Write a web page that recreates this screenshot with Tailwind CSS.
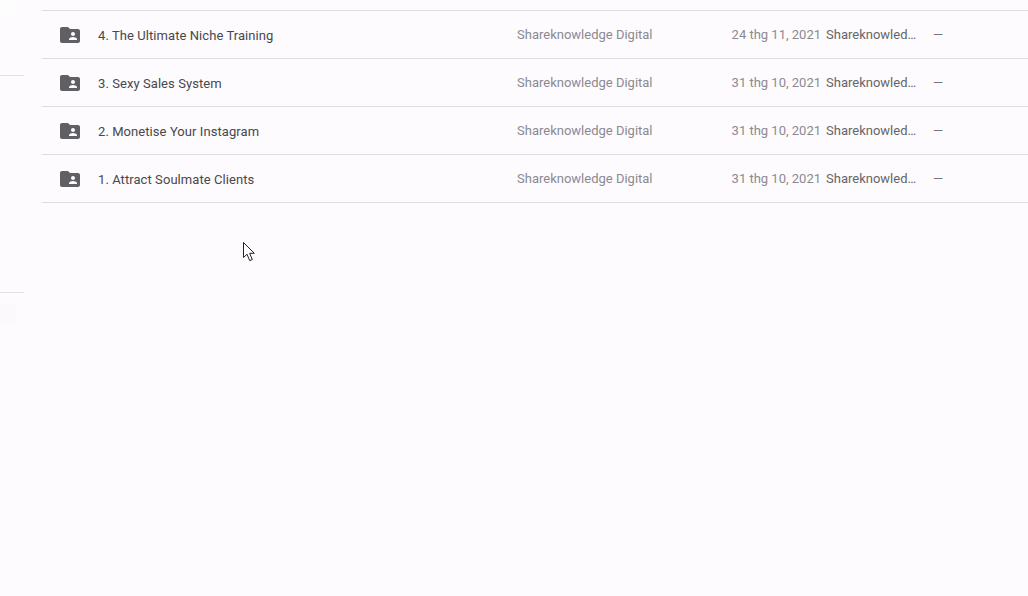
<!DOCTYPE html>
<html><head><meta charset="utf-8"><script src="https://cdn.jsdelivr.net/npm/@tailwindcss/browser@4"></script></head>
<body class="bg-[#fdfbfe]">
<div class="relative flex h-[596px] w-[1028px] overflow-hidden bg-[#fdfbfe] font-['Roboto',sans-serif] text-[13px]">
  <aside class="flex h-full w-[24px] shrink-0 flex-col">
    <div class="h-[15px] w-[16px] bg-[#fefdfe]"></div>
    <div class="mt-[60px] h-px w-full bg-[#e3e1e4]"></div>
    <div class="mt-[216px] h-px w-full bg-[#e3e1e4]"></div>
    <div class="mt-[12px] h-[20px] w-[16px] bg-[#fcf9fc]"></div>
  </aside>
  <main class="ml-[18px] flex-1 pt-[10px]">
    <div class="border-t border-[#dedcdf]">
      <div class="flex h-[48px] items-center border-b border-[#dedcdf]">
        <svg class="ml-[16px] mr-[16px] size-[24px] shrink-0 fill-[#5f6065]" viewBox="0 0 24 24"><path d="M20 6h-8l-2-2H4c-1.1 0-1.99.9-1.99 2L2 18c0 1.1.9 2 2 2h16c1.1 0 2-.9 2-2V8c0-1.1-.9-2-2-2zm-5 3c1.1 0 2 .9 2 2s-.9 2-2 2-2-.9-2-2 .9-2 2-2zm4 8h-8v-1c0-1.33 2.67-2 4-2s4 .67 4 2v1z"/></svg>
        <span class="w-[419px] shrink-0 translate-y-px tracking-[0.07px] text-[#47484d]">4. The Ultimate Niche Training</span>
        <span class="w-[195px] shrink-0 text-[#8b8a90]">Shareknowledge Digital</span>
        <span class="w-[109px] shrink-0 text-right text-[#8b8a90]">24 thg 11, 2021</span>
        <span class="ml-[5px] w-[92px] shrink-0 truncate text-[#65666b]">Shareknowledge Digital</span>
        <span class="ml-[15px] text-[#77767c]">—</span>
      </div>
      <div class="flex h-[48px] items-center border-b border-[#dedcdf]">
        <svg class="ml-[16px] mr-[16px] size-[24px] shrink-0 fill-[#5f6065]" viewBox="0 0 24 24"><path d="M20 6h-8l-2-2H4c-1.1 0-1.99.9-1.99 2L2 18c0 1.1.9 2 2 2h16c1.1 0 2-.9 2-2V8c0-1.1-.9-2-2-2zm-5 3c1.1 0 2 .9 2 2s-.9 2-2 2-2-.9-2-2 .9-2 2-2zm4 8h-8v-1c0-1.33 2.67-2 4-2s4 .67 4 2v1z"/></svg>
        <span class="w-[419px] shrink-0 translate-y-px tracking-[0.07px] text-[#47484d]">3. Sexy Sales System</span>
        <span class="w-[195px] shrink-0 text-[#8b8a90]">Shareknowledge Digital</span>
        <span class="w-[109px] shrink-0 text-right text-[#8b8a90]">31 thg 10, 2021</span>
        <span class="ml-[5px] w-[92px] shrink-0 truncate text-[#65666b]">Shareknowledge Digital</span>
        <span class="ml-[15px] text-[#77767c]">—</span>
      </div>
      <div class="flex h-[48px] items-center border-b border-[#dedcdf]">
        <svg class="ml-[16px] mr-[16px] size-[24px] shrink-0 fill-[#5f6065]" viewBox="0 0 24 24"><path d="M20 6h-8l-2-2H4c-1.1 0-1.99.9-1.99 2L2 18c0 1.1.9 2 2 2h16c1.1 0 2-.9 2-2V8c0-1.1-.9-2-2-2zm-5 3c1.1 0 2 .9 2 2s-.9 2-2 2-2-.9-2-2 .9-2 2-2zm4 8h-8v-1c0-1.33 2.67-2 4-2s4 .67 4 2v1z"/></svg>
        <span class="w-[419px] shrink-0 translate-y-px tracking-[0.07px] text-[#47484d]">2. Monetise Your Instagram</span>
        <span class="w-[195px] shrink-0 text-[#8b8a90]">Shareknowledge Digital</span>
        <span class="w-[109px] shrink-0 text-right text-[#8b8a90]">31 thg 10, 2021</span>
        <span class="ml-[5px] w-[92px] shrink-0 truncate text-[#65666b]">Shareknowledge Digital</span>
        <span class="ml-[15px] text-[#77767c]">—</span>
      </div>
      <div class="flex h-[48px] items-center border-b border-[#dedcdf]">
        <svg class="ml-[16px] mr-[16px] size-[24px] shrink-0 fill-[#5f6065]" viewBox="0 0 24 24"><path d="M20 6h-8l-2-2H4c-1.1 0-1.99.9-1.99 2L2 18c0 1.1.9 2 2 2h16c1.1 0 2-.9 2-2V8c0-1.1-.9-2-2-2zm-5 3c1.1 0 2 .9 2 2s-.9 2-2 2-2-.9-2-2 .9-2 2-2zm4 8h-8v-1c0-1.33 2.67-2 4-2s4 .67 4 2v1z"/></svg>
        <span class="w-[419px] shrink-0 translate-y-px tracking-[0.07px] text-[#47484d]">1. Attract Soulmate Clients</span>
        <span class="w-[195px] shrink-0 text-[#8b8a90]">Shareknowledge Digital</span>
        <span class="w-[109px] shrink-0 text-right text-[#8b8a90]">31 thg 10, 2021</span>
        <span class="ml-[5px] w-[92px] shrink-0 truncate text-[#65666b]">Shareknowledge Digital</span>
        <span class="ml-[15px] text-[#77767c]">—</span>
      </div>
    </div>
  </main>
  <svg class="absolute left-[243px] top-[242px] h-[20px] w-[13px]" viewBox="0 0 13 20"><path d="M.5.5V15.5L4 12.2L6.7 18.6L9.3 17.5L6.6 11.3H11.3Z" fill="#fff" stroke="#222" stroke-width="1"/></svg>
</div>
</body></html>
